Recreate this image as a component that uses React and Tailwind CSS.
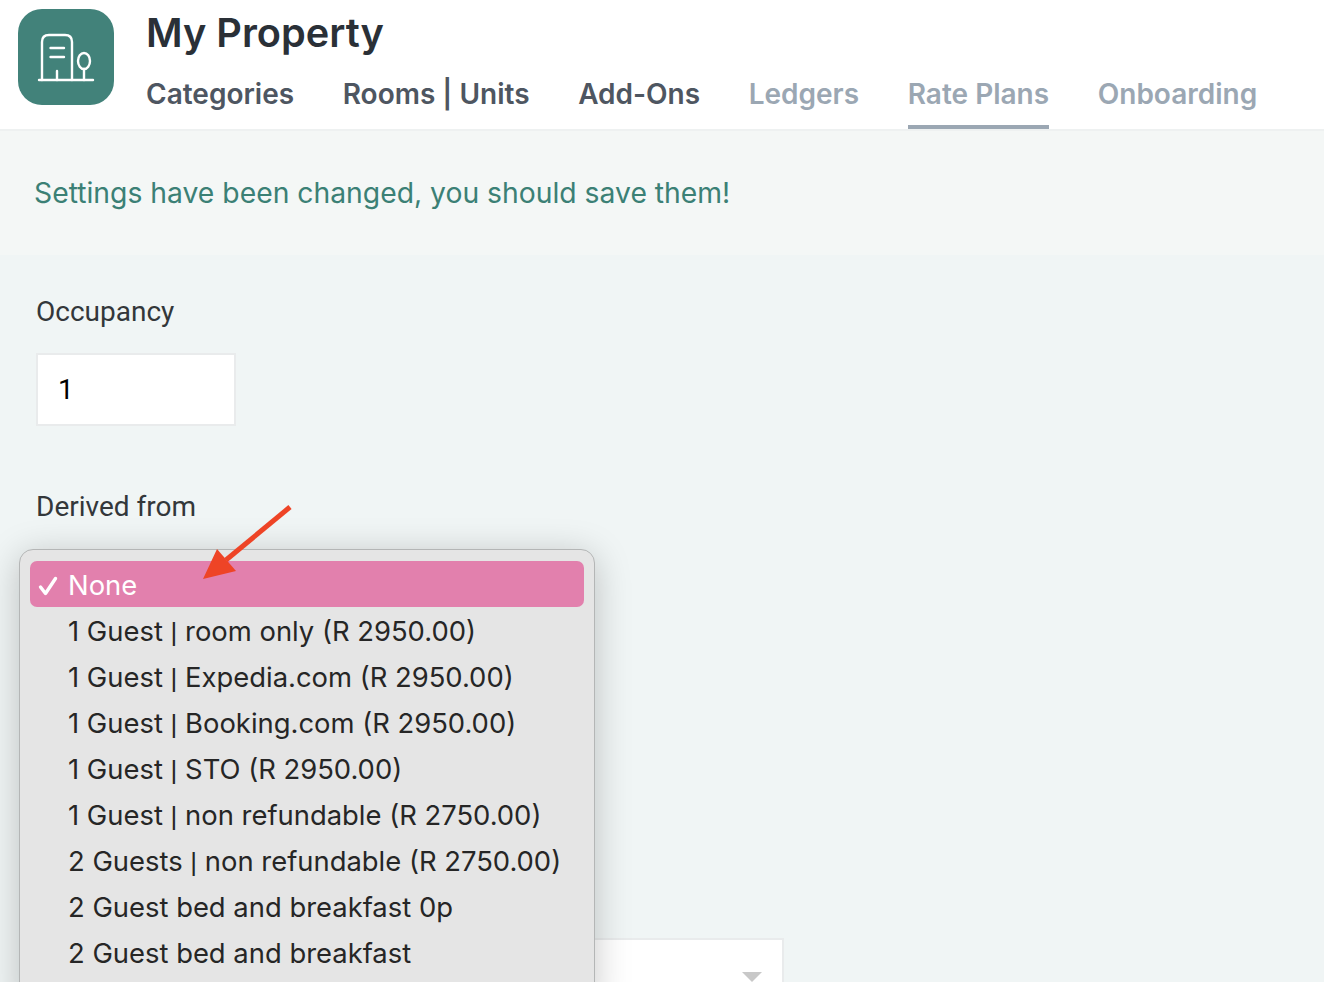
const tabs = [
  { label: "Categories", color: "text-[#4e5661]" },
  { label: "Rooms | Units", color: "text-[#4e5661]" },
  { label: "Add-Ons", color: "text-[#4e5661]" },
  { label: "Ledgers", color: "text-[#9ba7b3]" },
  { label: "Rate Plans", color: "text-[#9ba7b3]", active: true },
  { label: "Onboarding", color: "text-[#9ba7b3]" },
];

const options = [
  "1 Guest | room only (R 2950.00)",
  "1 Guest | Expedia.com (R 2950.00)",
  "1 Guest | Booking.com (R 2950.00)",
  "1 Guest | STO (R 2950.00)",
  "1 Guest | non refundable (R 2750.00)",
  "2 Guests | non refundable (R 2750.00)",
  "2 Guest bed and breakfast 0p",
  "2 Guest bed and breakfast",
];

function Logo() {
  return (
    <div className="w-24 h-24 shrink-0 rounded-[24px] bg-[#42827a]">
      <svg width="96" height="96" viewBox="0 0 96 96" fill="none" stroke="white" strokeWidth="2.4" strokeLinecap="round" strokeLinejoin="round">
        <path d="M21 71H75" />
        <path d="M24 71V33C24 28.5 26.5 26 31 26H47C51.5 26 54 28.5 54 33V71" />
        <path d="M32.5 39H46" />
        <path d="M32.5 48H46" />
        <path d="M39 71V62" />
        <path d="M66 71V60" />
        <ellipse cx="66" cy="52" rx="6" ry="8" />
      </svg>
    </div>
  );
}

function Option({ text }) {
  const [left, right] = text.split(" | ");
  return (
    <div className="h-[46px] pt-[3px] pl-[38px] flex items-center text-[27.4px] text-[#262626]">
      <span className="whitespace-pre">
        {left}
        {right && (
          <>
            {" "}
            <span className="font-['Liberation_Sans',sans-serif] text-[26px]">|</span>
            {" "}
            {right}
          </>
        )}
      </span>
    </div>
  );
}

export default function App() {
  return (
    <div className="relative h-[982px] w-[1324px] overflow-hidden bg-[#f0f5f5] font-['Inter',sans-serif]">
      <header className="h-[131px] bg-white border-b-2 border-[#eef1f1] flex pl-[18px] pt-[9px]">
        <Logo />
        <div className="ml-[33px] flex flex-col">
          <h1 className="-ml-[1px] text-[39.7px] leading-[48px] font-semibold text-[#2a3037]">My Property</h1>
          <nav className="flex gap-[48.6px] mt-[3px] -ml-[1px]">
            {tabs.map((tab) => (
              <div
                key={tab.label}
                className={`h-[69px] pt-[15px] text-[28px] leading-[38px] font-semibold whitespace-nowrap border-b-4 ${tab.color} ${tab.active ? "border-[#9ba7b3]" : "border-transparent"}`}
              >
                {tab.label}
              </div>
            ))}
          </nav>
        </div>
      </header>

      <div className="h-[124px] bg-[#f4f7f6] pl-[34px] pt-[44px] text-[28.3px] leading-[36px] text-[#3b8075]">
        Settings have been changed, you should save them!
      </div>

      <div className="pl-[36px] pt-[39px] font-['Roboto',sans-serif]">
        <label className="block text-[28px] leading-[36px] text-[#33373a]">Occupancy</label>
        <div className="mt-[23px] w-[200px] h-[73px] bg-white border-2 border-[#e9ebec] pl-[20px] flex items-center text-[28px] text-black">
          1
        </div>
        <label className="block mt-[63px] text-[28px] leading-[36px] text-[#33373a]">Derived from</label>
        <div className="mt-[413px] w-[748px] h-[80px] bg-white border-2 border-[#e9ebec] relative">
          <div className="absolute right-[20px] top-[32px] w-0 h-0 border-x-[10px] border-x-transparent border-t-[10px] border-t-[#c8c8c8]" />
        </div>
      </div>

      <div className="absolute left-[19px] top-[549px] w-[576px] h-[460px] bg-[#e5e5e5] rounded-[14px] border border-[#b4b6b6] p-[11px] pl-[10px] shadow-[0_6px_36px_rgba(0,0,0,0.22)]">
        <div className="h-[46px] w-[554px] pt-[3px] rounded-[7px] bg-[#e280ad] flex items-center text-white text-[27.4px]">
          <svg className="ml-[8px] mr-[10px] shrink-0" width="20" height="20" viewBox="0 0 20 20" fill="none" stroke="white" strokeWidth="3.4" strokeLinecap="round" strokeLinejoin="round">
            <path d="M2.5 11L7.5 17.5L17.5 2.5" />
          </svg>
          None
        </div>
        {options.map((option) => (
          <Option key={option} text={option} />
        ))}
      </div>

      <svg className="absolute left-[200px] top-[503px]" width="94" height="80" viewBox="0 0 94 80" fill="none">
        <path d="M90 4L26 57" stroke="#ee4426" strokeWidth="5" />
        <path d="M3 76L17 46L36 68Z" fill="#ee4426" />
      </svg>
    </div>
  );
}
